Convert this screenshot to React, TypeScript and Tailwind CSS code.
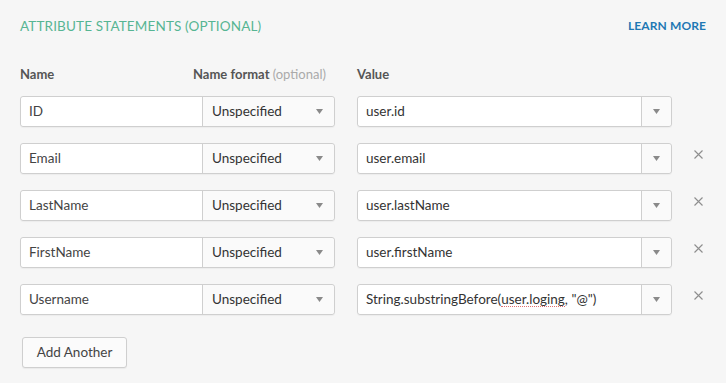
import React from 'react';

const ROWS = [
  { name: 'ID', value: 'user.id', removable: false },
  { name: 'Email', value: 'user.email', removable: true },
  { name: 'LastName', value: 'user.lastName', removable: true },
  { name: 'FirstName', value: 'user.firstName', removable: true },
  { name: 'Username', value: 'String.substringBefore(user.loging, "@")', removable: true },
];

const Caret = () => (
  <svg width="7" height="5" viewBox="0 0 7 5" className="shrink-0">
    <path d="M0 0 L7 0 L3.5 5 Z" fill="#8a8a8a" />
  </svg>
);

const Cross = () => (
  <svg width="9" height="9" viewBox="0 0 9 9">
    <path d="M0.5 0.5 L8.5 8.5 M8.5 0.5 L0.5 8.5" stroke="#8e8e8e" strokeWidth="1.1" />
  </svg>
);

export default function App() {
  return (
    <div className="w-[726px] h-[383px] bg-[#f6f6f6] text-[#333] font-['Lato','Open_Sans',sans-serif] pl-5 pt-[18px] overflow-hidden">
      <div className="flex items-center justify-between pr-5 h-[16px]">
        <h2 className="text-[13.5px] text-[#56b593] tracking-[0.15px]">ATTRIBUTE STATEMENTS (OPTIONAL)</h2>
        <a className="text-[12px] font-bold text-[#1f78b4] tracking-[0.1px]">LEARN MORE</a>
      </div>

      <div className="flex items-center mt-[34px] h-[14px] text-[13px] font-bold text-[#555]">
        <div className="w-[173px]">Name</div>
        <div className="w-[164px]">
          Name format <span className="font-normal text-[#aaa]">(optional)</span>
        </div>
        <div>Value</div>
      </div>

      <div className="flex flex-col gap-4 mt-[14px]">
        {ROWS.map((row) => (
          <div key={row.name} className="flex items-center h-[31px]">
            <div className="flex w-[315px] h-full border border-[#cfcfcf] rounded-[3px] shadow-[0_1px_1px_rgba(0,0,0,0.04)] text-[13.5px]">
              <div className="w-[181px] bg-white rounded-l-[3px] flex items-center pl-2 text-[#444]">{row.name}</div>
              <div className="flex-1 bg-[#fafafa] border-l border-[#cfcfcf] rounded-r-[3px] flex items-center justify-between pl-[9px] pr-[11px] text-[#333]">
                Unspecified
                <Caret />
              </div>
            </div>
            <div className="flex w-[315px] h-full ml-[22px] border border-[#cfcfcf] rounded-[3px] shadow-[0_1px_1px_rgba(0,0,0,0.04)] text-[13.5px]">
              <div className="flex-1 bg-white rounded-l-[3px] flex items-center pl-2 text-[#333] whitespace-nowrap">
                {row.value.includes('user.loging') ? (
                  <>
                    String.substringBefore(
                    <span className="border-b border-dotted border-[#e07070] leading-[14px]">user.loging</span>
                    , "@")
                  </>
                ) : (
                  row.value
                )}
              </div>
              <div className="w-[30px] bg-[#fafafa] border-l border-[#cfcfcf] rounded-r-[3px] flex items-center justify-center">
                <Caret />
              </div>
            </div>
            {row.removable && (
              <div className="ml-[22px] -mt-2">
                <Cross />
              </div>
            )}
          </div>
        ))}
      </div>

      <button className="mt-[22px] ml-[2px] h-[31px] w-[105px] border border-[#cfcfcf] rounded-[3px] bg-[#fbfbfb] shadow-[0_1px_1px_rgba(0,0,0,0.05)] text-[13.5px] text-[#444]">
        Add Another
      </button>
    </div>
  );
}
